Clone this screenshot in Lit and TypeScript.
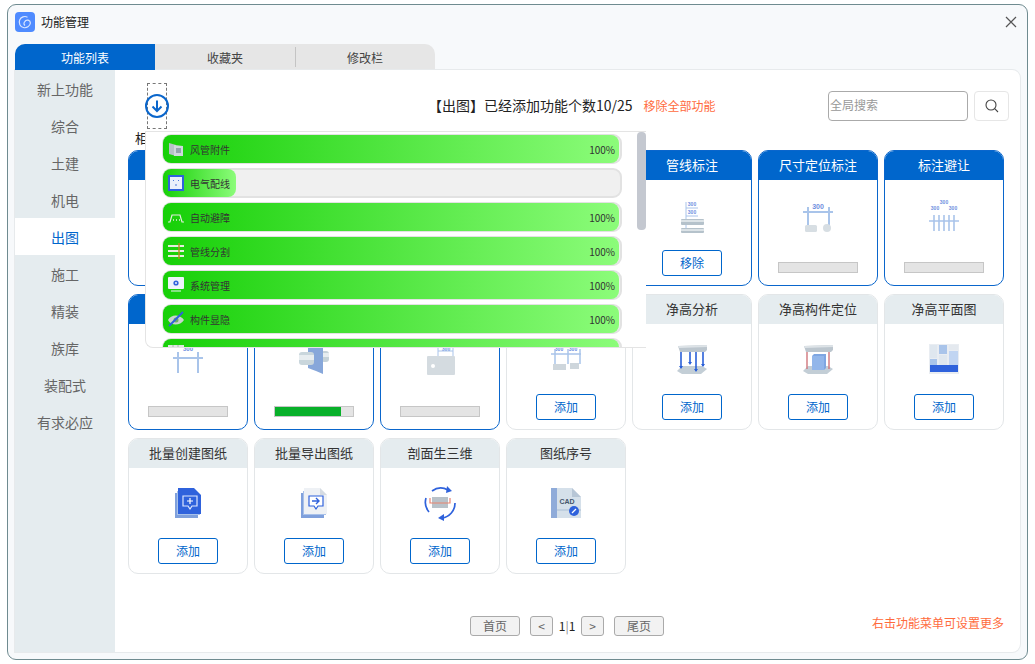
import { css, html, LitElement, svg } from 'lit';
import { customElement } from 'lit/decorators.js';

const PALE = '#a9c4ea';
const BLUE = '#2f62dc';

const box40 = (body: unknown) =>
  html`<svg class="art" width="40" height="40" viewBox="0 0 40 40" fill="none">${body}</svg>`;
const box16 = (body: unknown) =>
  html`<svg class="row-icon" width="16" height="16" viewBox="0 0 16 16" fill="none">${body}</svg>`;
const num = (x: number, y: number, size = 5) =>
  svg`<text x=${x} y=${y} font-size=${size} font-weight="700" text-anchor="middle" fill="#6f8fe0" font-family="Liberation Sans, sans-serif">300</text>`;

const slab = svg`
  <path d="M6 7l29-1v5l-2 2H8z" fill="#bcc6ce" /><path d="M6 7l29-1v2L7 9z" fill="#dde3e7" />
  <path d="M10 27h20l5 3-6 5H10l-5-3z" fill="#c3ced6" />`;

const docBack = svg`
  <path d="M7 10h3v22h20v3H7z" fill="#7fa0dc" /><path d="M9 8h2v22h21v2H9z" fill="#a8c1ea" />`;

const ART: Record<string, unknown> = {
  dim: box40(svg`${num(20, 12, 6)}
    <path d="M5 19h30M10 13v21M30 13v21" stroke=${PALE} stroke-width="2" />`),
  pipe: box40(svg`
    <rect x="27" y="12" width="8" height="11" rx="3" fill="#c5d2d8" />
    <rect x="27" y="14" width="8" height="4" fill="#e7edf0" />
    <path d="M14 2h15v33l-7-3-8-3z" fill="#87a7da" />
    <rect x="5" y="13" width="15" height="13" rx="3" fill="#c9d6dc" />
    <rect x="5" y="16" width="15" height="5" fill="#e7edf0" />`),
  panel: box40(svg`${num(26, 12, 5)}${num(26, 6, 5)}
    <path d="M18 12h15M18 5v20M33 5v20" stroke=${PALE} />
    <rect x="7" y="17" width="28" height="19" rx="1" fill="#d4dbe0" />
    <circle cx="13" cy="27" r="2" fill="#fff" />`),
  boxes: box40(svg`${num(13, 12)}${num(27, 12)}
    <path d="M5 15h30M9 10v15M22 10v15M34 10v15" stroke=${PALE} stroke-width="1.5" />
    <rect x="7" y="25" width="13" height="6" fill="#ced6dc" />
    <rect x="24" y="24" width="9" height="6" fill="#ced6dc" />`),
  pipes: box40(svg`${num(20, 11)}${num(20, 19)}
    <path d="M14 7v28M14 13h12M14 21h12" stroke=${PALE} />
    <rect x="9" y="24" width="23" height="6" rx="1" fill="#b5c2cb" />
    <rect x="9" y="25" width="23" height="2" fill="#dce3e7" />
    <rect x="9" y="33" width="23" height="5" rx="1" fill="#b5c2cb" />
    <rect x="9" y="34" width="23" height="2" fill="#dce3e7" />`),
  locate: box40(svg`${num(20, 14, 7)}
    <path d="M5 17h30M10 12v18M31 12v18" stroke=${PALE} stroke-width="2" />
    <rect x="7" y="30" width="12" height="7" rx="1.5" fill="#d7dee3" />
    <circle cx="29" cy="33" r="4" fill="#d7dee3" />`),
  avoid: box40(svg`${num(20, 9)}${num(11, 15)}${num(29, 15)}
    <path d="M5 26h30M10 20v16M15 20v16M20 20v16M25 20v16M30 20v16" stroke=${PALE} stroke-width="1.6" />`),
  clear: box40(svg`${slab}
    <path d="M9 13v16M18 13v11M24 13v19M31 13v14" stroke="#2a5fd8" stroke-width="1.6" />
    <path d="M7 27l2 3 2-3zM16 23l2 3 2-3zM22 30l2 3 2-3zM29 25l2 3 2-3z" fill="#2a5fd8" />`),
  cube: box40(svg`${slab}
    <path d="M9 13v17M31 13v17" stroke="#d0767c" stroke-width="1.4" />
    <path d="M14 17l2-2h12v14l-2 2H14z" fill="#7ea6e2" /><path d="M14 17h12v14H14z" fill="#92b6ea" />`),
  plan: box40(svg`
    <rect x="5" y="5" width="30" height="30" fill="#e9edf2" />
    <rect x="6" y="6" width="7" height="13" fill="#dfe7ef" /><rect x="6" y="20" width="7" height="6" fill=${PALE} />
    <rect x="15" y="6" width="8" height="9" fill=${PALE} /><rect x="15" y="16" width="8" height="10" fill="#dfe7ef" />
    <rect x="25" y="6" width="9" height="5" fill="#e4e9ef" /><rect x="25" y="12" width="9" height="14" fill="#c1d5f2" />
    <rect x="6" y="26" width="28" height="7" fill=${BLUE} />`),
  create: box40(svg`${docBack}
    <path d="M10 5h16l7 7v19H10z" fill=${BLUE} />
    <path d="M15 13h14v10h-5l-2 3-2-3h-5z" stroke="#dce6ff" stroke-width="1.2" />
    <path d="M22 15v6M19 18h6" stroke="#fff" stroke-width="1.2" />`),
  export: box40(svg`${docBack}
    <path d="M10 5h16l7 7v19H10z" fill="#eef1f5" /><path d="M26 5l7 7h-7z" fill="#d5dbe2" />
    <path d="M15 13h14v10h-5l-2 3-2-3h-5z" fill="#fff" stroke=${BLUE} stroke-width="1.2" />
    <path d="M18 18h7M22 15l3 3-3 3" stroke=${BLUE} stroke-width="1.4" />`),
  section: box40(svg`
    <path d="M12 8A15 15 0 0 1 28 7M35 20A15 15 0 0 1 22 35M6 15A15 15 0 0 0 9 29" stroke=${BLUE} stroke-width="1.7" />
    <path d="M27 3l5 5-6 2zM24 31l-6 4 6 3z" fill=${BLUE} />
    <rect x="12" y="14" width="16" height="11" fill="#b9c2c9" />
    <path d="M10 15v5h20v-5" stroke="#e9836f" stroke-width="1.2" />`),
  cad: box40(svg`
    <path d="M5 5h6v30H5z" fill="#8fabd9" /><path d="M11 5h15l9 9v21H11z" fill="#d5e0ea" />
    <path d="M26 5l9 9h-9z" fill="#b7c6d6" /><path d="M11 27h24" stroke="#aabed4" />
    <text x="21" y="21" font-size="7" font-weight="700" text-anchor="middle" fill="#44566c" font-family="Liberation Sans, sans-serif">CAD</text>
    <circle cx="28" cy="28" r="5" fill=${BLUE} /><path d="M26 30l4-4" stroke="#fff" stroke-width="1.2" />`),
};

const ROW_ICONS: Record<string, unknown> = {
  duct: box16(svg`<path d="M1 2l7 2v11l-7-2z" fill="#b7c2c8" /><path d="M6 4l9 1v10H6z" fill="#cfd8dc" /><path d="M8 7h5v5H8z" fill="#93a3ad" />`),
  socket: box16(svg`<rect width="16" height="16" fill="#2f62dc" /><rect x="2" y="2" width="12" height="12" fill="#e9f0fb" /><path d="M5 6l1-1M11 6l-1-1M8 9v2" stroke="#4b78d8" />`),
  avoid: box16(svg`<path d="M0 13h2l2-7h8l2 7h2" stroke="#e4ecdf" stroke-width="1.2" /><path d="M5 11h1M8 11h1M11 11h1" stroke="#e4ecdf" stroke-width="1.6" />`),
  split: box16(svg`<path d="M0 3h16M0 8h16M0 13h16" stroke="#e6ecdf" stroke-width="2" /><path d="M11 0v16" stroke="#b88a1e" stroke-width="1.4" />`),
  system: box16(svg`<rect x="0" y="0" width="16" height="12" rx="1" fill="#eef3fb" /><circle cx="8" cy="6" r="2.6" fill="#2f62dc" /><circle cx="8" cy="6" r="1" fill="#eef3fb" /><path d="M3 14h10" stroke="#eef3fb" stroke-width="1.2" />`),
  eye: box16(svg`<path d="M0 9c3-6 12-6 16 0-4 6-13 6-16 0z" fill="#c9d3cf" /><circle cx="8" cy="9" r="2.5" fill="#6fae63" /><path d="M1 15L15 1" stroke="#2f62dc" stroke-width="2" />`),
  table: box16(svg`<rect width="16" height="13" fill="#dfe7e2" /><path d="M0 4h16M5 0v13M10 0v13" stroke="#aab6b0" />`),
};

interface Card {
  title: string;
  art: string;
  on?: boolean;
  action?: string;
  bar?: number;
}

// cards with an empty title sit with their header under the popup
const CARDS: Card[] = [
  { title: '', art: 'dim', on: true, bar: 0 },
  { title: '', art: 'pipe', on: true, bar: 0 },
  { title: '', art: 'panel', on: true, bar: 0 },
  { title: '', art: 'boxes', on: true, bar: 0 },
  { title: '管线标注', art: 'pipes', on: true, action: '移除' },
  { title: '尺寸定位标注', art: 'locate', on: true, bar: 0 },
  { title: '标注避让', art: 'avoid', on: true, bar: 0 },
  { title: '', art: 'dim', on: true, bar: 0 },
  { title: '', art: 'pipe', on: true, bar: 84 },
  { title: '', art: 'panel', on: true, bar: 0 },
  { title: '', art: 'boxes', action: '添加' },
  { title: '净高分析', art: 'clear', action: '添加' },
  { title: '净高构件定位', art: 'cube', action: '添加' },
  { title: '净高平面图', art: 'plan', action: '添加' },
  { title: '批量创建图纸', art: 'create', action: '添加' },
  { title: '批量导出图纸', art: 'export', action: '添加' },
  { title: '剖面生三维', art: 'section', action: '添加' },
  { title: '图纸序号', art: 'cad', action: '添加' },
];

const DOWNLOADS = [
  { name: '风管附件', icon: 'duct', pct: 100, label: true },
  { name: '电气配线', icon: 'socket', pct: 16 },
  { name: '自动避障', icon: 'avoid', pct: 100, label: true },
  { name: '管线分割', icon: 'split', pct: 100, label: true },
  { name: '系统管理', icon: 'system', pct: 100, label: true },
  { name: '构件显隐', icon: 'eye', pct: 100, label: true },
  { name: '', icon: 'table', pct: 100 },
];

const NAV = ['新上功能', '综合', '土建', '机电', '出图', '施工', '精装', '族库', '装配式', '有求必应'];
const ACTIVE_NAV = '出图';

@customElement('app-root')
export class AppRoot extends LitElement {
  static override styles = css`
    :host {
      display: block;
      width: 1035px;
      height: 664px;
      box-sizing: border-box;
      padding: 4px 7px;
      background: #fff;
      font-family: 'Noto Sans CJK SC', 'Noto Sans', sans-serif;
    }
    .window {
      height: 656px;
      box-sizing: border-box;
      display: flex;
      flex-direction: column;
      padding: 0 7px 7px;
      border: 1px solid #6f8b90;
      border-radius: 9px;
      background: #f7f9fb;
    }
    .titlebar {
      height: 39px;
      flex: none;
      display: flex;
      align-items: center;
      gap: 6px;
      padding-bottom: 6px;
      box-sizing: border-box;
      font-size: 12px;
      color: #222;
    }
    .close {
      margin-left: auto;
      margin-right: 3px;
    }
    .tabs {
      display: flex;
      height: 26px;
      flex: none;
      width: 420px;
      border-radius: 10px 10px 0 0;
      overflow: hidden;
      background: #e6e6e6;
    }
    .tab {
      width: 140px;
      display: flex;
      align-items: center;
      justify-content: center;
      font-size: 12px;
      color: #444;
      position: relative;
    }
    .tab.active {
      background: #0066cc;
      color: #fff;
    }
    .tab.split::before {
      content: '';
      position: absolute;
      left: 0;
      top: 3px;
      bottom: 3px;
      width: 1px;
      background: #c4c4c4;
    }
    .panel {
      flex: 1;
      display: flex;
      min-height: 0;
      background: #fff;
      border-radius: 0 8px 8px 0;
      box-shadow: 0 0 0 1px #e7eaec;
    }
    .nav {
      width: 100px;
      flex: none;
      background: #e5ecef;
    }
    .nav-item {
      height: 37px;
      display: flex;
      align-items: center;
      justify-content: center;
      font-size: 14px;
      color: #666;
    }
    .nav-item.active {
      background: #fff;
      color: #0066cc;
    }
    .main {
      flex: 1;
      position: relative;
      display: flex;
      flex-direction: column;
      padding: 21px 16px 16px 13px;
    }
    .toolbar {
      display: flex;
      align-items: center;
      height: 30px;
      margin-right: -5px;
      padding-left: 300px;
    }
    .count {
      margin-bottom: 2px;
      font-size: 14px;
      color: #222;
    }
    .remove-all {
      margin-left: 11px;
      margin-bottom: 2px;
      font-size: 12px;
      color: #ff6b3d;
    }
    .search {
      margin-left: auto;
      width: 140px;
      height: 30px;
      box-sizing: border-box;
      padding: 0 0 3px 1px;
      display: flex;
      align-items: center;
      border: 1px solid #aaa;
      border-radius: 4px;
      font-size: 12px;
      color: #999;
    }
    .search-btn {
      margin-left: 6px;
      width: 35px;
      height: 30px;
      box-sizing: border-box;
      display: flex;
      align-items: center;
      justify-content: center;
      border: 1px solid #e6e6e6;
      border-radius: 4px;
    }
    .section-label {
      margin: 8px 0 4px 7px;
      height: 17px;
      line-height: 17px;
      font-size: 13px;
      color: #222;
    }
    .grid {
      display: grid;
      grid-template-columns: repeat(7, 120px);
      grid-auto-rows: 136px;
      gap: 8px 6px;
    }
    .card {
      display: flex;
      flex-direction: column;
      align-items: center;
      box-sizing: border-box;
      border: 1px solid #e3e6e8;
      border-radius: 10px;
      overflow: hidden;
    }
    .card.on {
      border-color: #0a66cc;
    }
    .card-title {
      align-self: stretch;
      flex: none;
      height: 29px;
      box-sizing: border-box;
      padding-bottom: 2px;
      display: flex;
      align-items: center;
      justify-content: center;
      background: #e5ecef;
      font-size: 13px;
      color: #333;
    }
    .card.on .card-title {
      background: #0066cc;
      color: #fff;
    }
    .art {
      display: block;
      margin-top: 15px;
      flex: none;
    }
    .action {
      margin-top: auto;
      margin-bottom: 9px;
      width: 60px;
      height: 26px;
      box-sizing: border-box;
      padding-bottom: 2px;
      display: flex;
      align-items: center;
      justify-content: center;
      border: 1px solid #0066cc;
      border-radius: 3px;
      font-size: 12px;
      color: #0066cc;
    }
    .bar {
      margin-top: auto;
      margin-bottom: 12px;
      width: 80px;
      height: 11px;
      box-sizing: border-box;
      background: #e4e4e4;
      border: 1px solid #c6c6c6;
    }
    .bar-fill {
      height: 100%;
      background: #08b02a;
    }
    .footer {
      margin-top: auto;
      display: flex;
      align-items: flex-start;
      height: 20px;
      padding-left: 342px;
    }
    .page-btn {
      height: 20px;
      box-sizing: border-box;
      padding-bottom: 2px;
      display: flex;
      align-items: center;
      justify-content: center;
      background: #f2f2f2;
      border: 1px solid #aaa;
      border-radius: 3px;
      font-size: 12px;
      color: #666;
    }
    .page-wide {
      width: 50px;
    }
    .page-small {
      width: 23px;
    }
    .first {
      margin-right: 10px;
    }
    .last {
      margin-left: 10px;
    }
    .page-no {
      width: 28px;
      text-align: center;
      font-size: 12px;
      line-height: 19px;
      color: #222;
    }
    .page-no span {
      color: #888;
    }
    .hint {
      margin-left: auto;
      line-height: 14px;
      font-size: 12px;
      color: #ff6b3d;
    }
    .pin {
      position: absolute;
      left: 32px;
      top: 13px;
      width: 20px;
      height: 46px;
      box-sizing: border-box;
      display: flex;
      align-items: center;
      justify-content: center;
      border: 1px dashed #777;
      z-index: 3;
    }
    .pin svg {
      flex: none;
    }
    .popup {
      position: absolute;
      left: 30px;
      top: 61px;
      width: 501px;
      height: 217px;
      box-sizing: border-box;
      padding: 2px 0 0 16px;
      overflow: hidden;
      background: #fff;
      border: 1px solid #e4e4e4;
      border-right: none;
      border-radius: 0 0 0 8px;
      z-index: 2;
    }
    .thumb {
      position: absolute;
      right: 0;
      top: 0;
      width: 9px;
      height: 98px;
      border-radius: 4px;
      background: #c4c8d0;
    }
    .row {
      position: relative;
      width: 460px;
      height: 30px;
      box-sizing: border-box;
      margin-bottom: 4px;
      display: flex;
      align-items: center;
      padding: 0 5px 0 4px;
      background: #f0f0f0;
      border: 2px solid #e2e2e2;
      border-radius: 9px;
      font-size: 10px;
      color: #333;
    }
    .row-fill {
      position: absolute;
      left: -1px;
      top: -1px;
      bottom: -1px;
      border-radius: 8px;
      background: linear-gradient(90deg, #17d008, #8cfc7a);
    }
    .row-icon {
      position: relative;
      flex: none;
    }
    .row-name {
      position: relative;
      margin-left: 6px;
    }
    .row-pct {
      position: relative;
      margin-left: auto;
    }
  `;

  private renderCard(card: Card) {
    return html`
      <div class="card ${card.on ? 'on' : ''}">
        <div class="card-title">${card.title}</div>
        ${ART[card.art]}
        ${card.action
          ? html`<div class="action">${card.action}</div>`
          : html`<div class="bar"><div class="bar-fill" style="width:${card.bar}%"></div></div>`}
      </div>
    `;
  }

  override render() {
    return html`
      <div class="window">
        <div class="titlebar">
          <svg width="20" height="20" viewBox="0 0 20 20" fill="none">
            <rect width="20" height="20" rx="4" fill="#4f8bff" />
            <path d="M12.5 5.2A5.6 5.6 0 1 0 15.4 11 3 3 0 0 0 9.8 9.6 2.6 2.6 0 0 0 10 13.6" stroke="#dbe7ff" stroke-width="1.2" />
          </svg>
          功能管理
          <svg class="close" width="12" height="12" viewBox="0 0 12 12" fill="none">
            <path d="M1 1l10 10M11 1L1 11" stroke="#555" stroke-width="1.2" />
          </svg>
        </div>
        <div class="tabs">
          <div class="tab active">功能列表</div>
          <div class="tab">收藏夹</div>
          <div class="tab split">修改栏</div>
        </div>
        <div class="panel">
          <div class="nav">
            ${NAV.map((n) => html`<div class="nav-item ${n === ACTIVE_NAV ? 'active' : ''}">${n}</div>`)}
          </div>
          <div class="main">
            <div class="toolbar">
              <span class="count">【出图】已经添加功能个数10/25</span>
              <span class="remove-all">移除全部功能</span>
              <div class="search">全局搜索</div>
              <div class="search-btn">
                <svg width="14" height="14" viewBox="0 0 14 14" fill="none">
                  <circle cx="6" cy="6" r="5" stroke="#444" stroke-width="1.1" />
                  <path d="M9.7 9.7L13 13" stroke="#444" stroke-width="1.1" />
                </svg>
              </div>
            </div>
            <div class="section-label">相</div>
            <div class="grid">${CARDS.map((c) => this.renderCard(c))}</div>
            <div class="footer">
              <div class="page-btn page-wide first">首页</div>
              <div class="page-btn page-small">&lt;</div>
              <div class="page-no">1<span>|</span>1</div>
              <div class="page-btn page-small">&gt;</div>
              <div class="page-btn page-wide last">尾页</div>
              <div class="hint">右击功能菜单可设置更多</div>
            </div>

            <div class="pin">
              <svg width="24" height="24" viewBox="0 0 24 24" fill="none">
                <circle cx="12" cy="12" r="11" stroke="#0a66cc" stroke-width="2" />
                <path d="M12 6.5v10M7.5 12.5l4.5 4.5 4.5-4.5" stroke="#0a66cc" stroke-width="2" />
              </svg>
            </div>
            <div class="popup">
              ${DOWNLOADS.map(
                (d) => html`
                  <div class="row">
                    <div class="row-fill" style="width:${d.pct}%"></div>
                    ${ROW_ICONS[d.icon]}
                    <span class="row-name">${d.name}</span>
                    ${d.label ? html`<span class="row-pct">100%</span>` : ''}
                  </div>
                `,
              )}
              <div class="thumb"></div>
            </div>
          </div>
        </div>
      </div>
    `;
  }
}

declare global {
  interface HTMLElementTagNameMap {
    'app-root': AppRoot;
  }
}
